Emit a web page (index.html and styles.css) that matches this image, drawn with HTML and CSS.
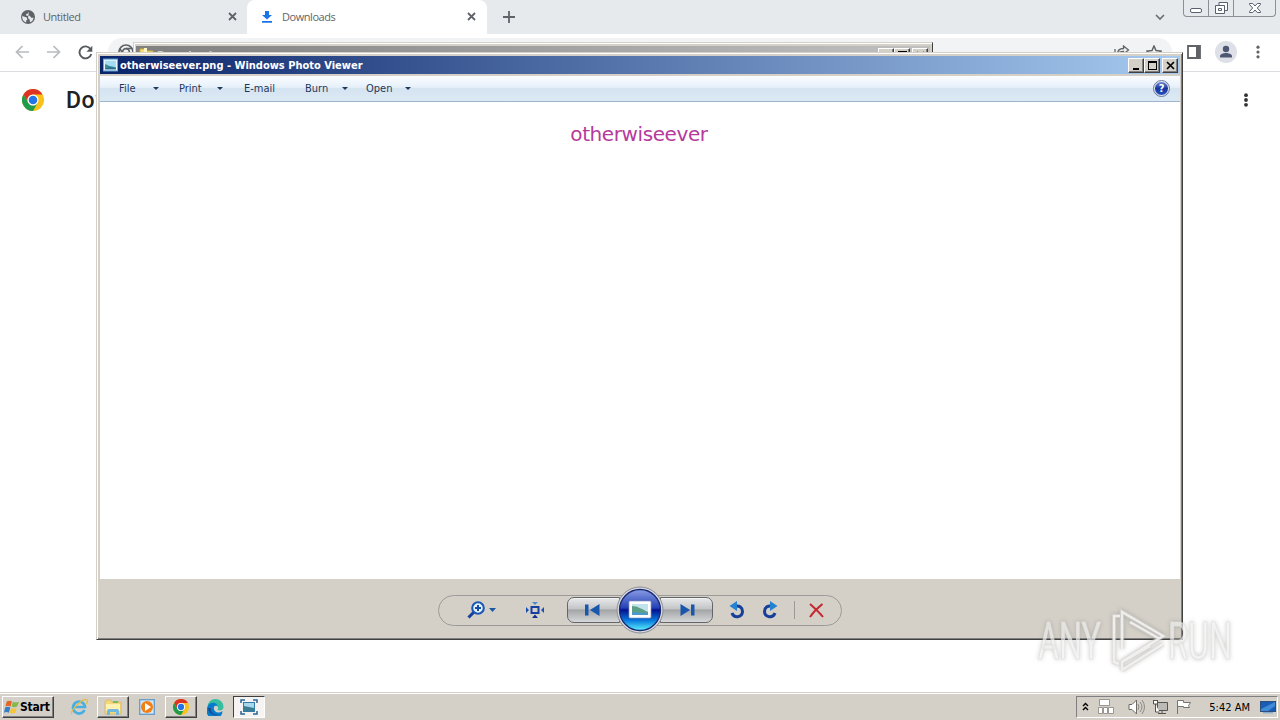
FILE: index.html
```
<!DOCTYPE html>
<html lang="en">

<head>
    <meta charset="UTF-8">
    <meta name="viewport" content="width=device-width, initial-scale=1.0">
    <title>Desktop</title>
    <link rel="stylesheet" href="styles.css">
</head>

<body>
    <svg class="defs" width="0" height="0">
        <defs>
            <symbol id="chrome-logo" viewBox="0 0 24 24">
                <circle cx="12" cy="12" r="12" fill="#fbc116"/>
                <path d="M1.6 6A12 12 0 0 1 22.4 6H12a6 6 0 0 0-5.2 9z" fill="#de3226"/>
                <path d="M1.6 6A12 12 0 0 0 12 24l5.2-9A6 6 0 0 1 6.8 15z" fill="#209b4c"/>
                <circle cx="12" cy="12" r="6" fill="#fff"/>
                <circle cx="12" cy="12" r="4.7" fill="#2474e8"/>
            </symbol>
            <symbol id="picture" viewBox="0 0 14 12">
                <rect x=".5" y=".5" width="13" height="11" fill="#f4faff" stroke="#67add8"/>
                <rect x="2" y="2" width="10" height="8" fill="#a2dbf2"/>
                <path d="M2 5l4 2 6 1v2H2z" fill="#3a8a90"/>
                <path d="M2 9l5-1 5 1v1H2z" fill="#2b6c92"/>
            </symbol>
            <linearGradient id="orb" x1="0" y1="0" x2="0" y2="1">
                <stop offset="0" stop-color="#8a9de4"/>
                <stop offset=".45" stop-color="#2340b6"/>
                <stop offset=".5" stop-color="#04118e"/>
                <stop offset=".75" stop-color="#0878dc"/>
                <stop offset="1" stop-color="#5df4ff"/>
            </linearGradient>
        </defs>
    </svg>

    <main class="chrome">
        <div class="tabs">
            <div class="tab">
                <svg class="globe" width="14" height="14" viewBox="0 0 14 14">
                    <circle cx="7" cy="7" r="7" fill="#5f6368"/>
                    <path d="M1.3 6l4.4 1.4.7 2-1.2 1v2.2A6 6 0 0 1 1.3 6zM8 1.5L7 3.6 5.2 4v1.7h3.6l1.4 2h2.4a5.7 5.7 0 0 1-3.5 4.6L8.6 9.4 7 8" fill="#e7eaed"/>
                </svg>
                <span class="tab-title">Untitled</span>
                <svg class="close" width="9" height="9" viewBox="0 0 9 9"><path d="M1 1l7 7M8 1L1 8" stroke="#5f6368" stroke-width="1.8"/></svg>
            </div>
            <div class="tab tab-active">
                <svg class="download" width="10" height="12" viewBox="0 0 10 12"><path d="M3 0h4v4h3L5 8.6 0 4h3zM0 10h10v1.7H0z" fill="#1a73e8"/></svg>
                <span class="tab-title">Downloads</span>
                <svg class="close" width="9" height="9" viewBox="0 0 9 9"><path d="M1 1l7 7M8 1L1 8" stroke="#5f6368" stroke-width="1.8"/></svg>
            </div>
            <svg class="new-tab" width="12" height="12" viewBox="0 0 12 12"><path d="M6 0v12M0 6h12" stroke="#5f6368" stroke-width="1.8"/></svg>
            <svg class="tab-search" width="10" height="7" viewBox="0 0 10 7"><path d="M1 1l4 4 4-4" fill="none" stroke="#6b6f73" stroke-width="1.7"/></svg>
            <div class="win-buttons">
                <span class="wb"><svg width="12" height="16" viewBox="0 0 12 16"><rect x=".5" y="8.500" width="11" height="4" rx="1.500" fill="#fff" stroke="#596070"/></svg></span>
                <span class="wb"><svg width="13" height="16" viewBox="0 0 13 16"><path d="M4 5V2.500h8.500v8H10" fill="#fff" stroke="#596070"/><path d="M.5 5.500h9v8h-9zM3.500 8.500h3v2h-3z" fill="#fff" stroke="#596070"/></svg></span>
                <span class="wb wb-close"><svg width="12" height="16" viewBox="0 0 12 16"><path d="M.5 3.500h3.200L6 6l2.300-2.500h3.200v1L8.300 8l3.200 3.500v1H8.300L6 10l-2.300 2.500H.5v-1L3.700 8 .5 4.500z" fill="#fff" stroke="#596070"/></svg></span>
            </div>
        </div>
        <div class="toolbar">
            <svg width="14" height="14" viewBox="0 0 14 14"><path d="M14 7H1.500M7.500 1l-6 6 6 6" fill="none" stroke="#b8babd" stroke-width="1.7"/></svg>
            <svg class="forward" width="14" height="14" viewBox="0 0 14 14"><path d="M0 7h12.500M6.500 1l6 6-6 6" fill="none" stroke="#b8babd" stroke-width="1.7"/></svg>
            <svg class="reload" width="15" height="15" viewBox="0 0 15 15"><path d="M12.500 4A6 6 0 1 0 13.300 9" fill="none" stroke="#56595d" stroke-width="1.900"/><path d="M14.300.8v5.900H8.500z" fill="#56595d"/></svg>
            <div class="omnibox">
                <svg width="16" height="16" viewBox="0 0 16 16"><circle cx="8" cy="8" r="7" fill="none" stroke="#5f6368" stroke-width="1.700"/><circle cx="8" cy="8" r="3.400" fill="none" stroke="#5f6368" stroke-width="1.700"/><path d="M8 4.500h6.300M5 10L1.800 4.500M11 10l-3.200 5.500" stroke="#5f6368" stroke-width="1.500"/></svg>
                <svg class="share" width="16" height="14" viewBox="0 0 16 14"><path d="M1 4v8.500h12V9M3.500 9c0-4 3-5.500 6-5.500V1L14.500 5l-5 4V6.500C7 6.500 5 7 3.500 9z" fill="none" stroke="#5f6368" stroke-width="1.300"/></svg>
                <svg width="16" height="15" viewBox="0 0 16 15"><path d="M8 1l2 4.600 5 .5-3.800 3.200L12.400 14 8 11.500 3.600 14l1.200-4.700L1 6.100l5-.5z" fill="none" stroke="#5f6368" stroke-width="1.500"/></svg>
            </div>
            <svg class="side-panel" width="14" height="14" viewBox="0 0 14 14"><path d="M1 1h12v12H1z" fill="#fff" stroke="#5f6368" stroke-width="1.800"/><path d="M9 1h4v12H9z" fill="#5f6368"/></svg>
            <svg class="avatar" width="22" height="22" viewBox="0 0 22 22"><circle cx="11" cy="11" r="11" fill="#dde0e6"/><circle cx="11" cy="8" r="3.200" fill="#4d5773"/><path d="M5 16.500v-1.200c0-2.300 3.500-3.300 6-3.300s6 1 6 3.300v1.200z" fill="#4d5773"/></svg>
            <svg width="4" height="14" viewBox="0 0 4 14" fill="#5f6368"><circle cx="2" cy="2.200" r="1.600"/><circle cx="2" cy="7" r="1.600"/><circle cx="2" cy="11.800" r="1.600"/></svg>
        </div>
        <div class="page-header">
            <svg width="22" height="22"><use href="#chrome-logo"/></svg>
            <h1>Downloads</h1>
            <svg class="more" width="4" height="14" viewBox="0 0 4 14"><circle cx="2" cy="2.200" r="1.900"/><circle cx="2" cy="7" r="1.900"/><circle cx="2" cy="11.800" r="1.900"/></svg>
        </div>
    </main>

    <div class="explorer">
        <div class="explorer-title">
            <svg width="16" height="14" viewBox="0 0 16 14"><path d="M1 1h5l2 2h6v10H1z" fill="#f5dc7c" stroke="#d0ad40"/><path d="M5 0h3v7H5z" fill="#fff6c4"/></svg>
            <span>Downloads</span>
            <div class="caption">
                <span class="cap"><svg width="9" height="9" viewBox="0 0 9 9"><path d="M1 7h5v2H1z"/></svg></span>
                <span class="cap"><svg width="9" height="9" viewBox="0 0 9 9"><path d="M0 0h9v9H0zM1 2v6h7V2z" fill-rule="evenodd"/></svg></span>
                <span class="cap cap-close"><svg width="9" height="9" viewBox="0 0 9 9"><path d="M1 1l7 7M8 1L1 8" stroke="#000" stroke-width="1.700"/></svg></span>
            </div>
        </div>
    </div>

    <section class="viewer">
        <header class="titlebar">
            <svg width="15" height="14"><use href="#picture"/></svg>
            <span class="title">otherwiseever.png - Windows Photo Viewer</span>
            <div class="caption">
                <span class="cap"><svg width="9" height="9" viewBox="0 0 9 9"><path d="M1 7h6v2H1z"/></svg></span>
                <span class="cap"><svg width="9" height="9" viewBox="0 0 9 9"><path d="M0 0h9v9H0zM1 2v6h7V2z" fill-rule="evenodd"/></svg></span>
                <span class="cap cap-close"><svg width="9" height="9" viewBox="0 0 9 9"><path d="M1 1l7 7M8 1L1 8" stroke="#000" stroke-width="1.700"/></svg></span>
            </div>
        </header>
        <nav class="menu">
            <span class="item file">File</span><i class="arrow"></i>
            <span class="item print">Print</span><i class="arrow"></i>
            <span class="item email">E-mail</span>
            <span class="item burn">Burn</span><i class="arrow"></i>
            <span class="item open">Open</span><i class="arrow"></i>
            <span class="help">?</span>
        </nav>
        <div class="photo"><p>otherwiseever</p></div>
        <footer class="controls">
            <div class="pill">
                <svg class="zoom" width="19" height="18" viewBox="0 0 19 18"><path d="M7 11l-5.500 5.500" stroke="#173f9b" stroke-width="3"/><circle cx="11" cy="7" r="5.800" fill="#e4f3fb" stroke="#1c57b5" stroke-width="2.100"/><path d="M11 4v6M8 7h6" stroke="#164da6" stroke-width="2"/></svg>
                <i class="arrow blue"></i>
                <svg class="fit" width="18" height="16" viewBox="0 0 18 16"><path d="M5.500 5h7v6h-7z" fill="none" stroke="#153fa0" stroke-width="2"/><path d="M6 0h6L9 3z" fill="#4a8cca"/><path d="M0 5v6l3-3zM18 5v6l-3-3z" fill="#1c4eae"/><path d="M6 16h6l-3-3.500z" fill="#122e8d"/></svg>
                <div class="nav prev"><svg width="15" height="12" viewBox="0 0 15 12"><path d="M0 .5h3.500v11H0zM14.500 0v12L5 6z" fill="#1957ad"/></svg></div>
                <svg class="play" width="48" height="48" viewBox="0 0 48 48">
                    <circle cx="24" cy="24" r="23" fill="#d8d9dc" stroke="#8b8e98"/>
                    <circle cx="24" cy="24" r="20.500" fill="url(#orb)" stroke="#172875" stroke-width="1.300"/>
                    <rect x="13" y="15" width="22" height="17" rx="1" fill="#fff" stroke="#8d97b9" stroke-width=".7"/>
                    <rect x="16" y="18" width="16" height="11" fill="#c2e3ec"/>
                    <path d="M16 20c5 0 10 3 16 6v3H16z" fill="#5b9f86"/>
                    <path d="M16 26l16 1v2H16z" fill="#4b9aca"/>
                </svg>
                <div class="nav next"><svg width="15" height="12" viewBox="0 0 15 12"><path d="M11 .5h3.500v11H11zM.5 0v12L10 6z" fill="#1957ad"/></svg></div>
                <svg class="rotate left" width="16" height="18" viewBox="0 0 16 18"><path d="M6 5.200c4.500-1 7.500 1.500 7.500 5.300a5.400 5.400 0 0 1-10.500 1.600" fill="none" stroke="#173f99" stroke-width="3"/><path d="M.5 5L8 0v10z" fill="#2482d0"/></svg>
                <svg class="rotate" width="16" height="18" viewBox="0 0 16 18"><path d="M10 5.200C5.500 4.200 2.500 6.700 2.500 10.500a5.400 5.400 0 0 0 10.500 1.600" fill="none" stroke="#173f99" stroke-width="3"/><path d="M15.500 5L8 0v10z" fill="#2482d0"/></svg>
                <i class="separator"></i>
                <svg width="15" height="15" viewBox="0 0 15 15"><path d="M1 1c4 3.500 9 8 13 13M13.500 1C9 4.500 4 9.500 1 14" fill="none" stroke="#c3272f" stroke-width="2"/></svg>
            </div>
        </footer>
    </section>

    <svg class="watermark" width="204" height="74" viewBox="0 0 204 74">
        <g class="mark">
            <text x="6" y="56" textLength="63" lengthAdjust="spacingAndGlyphs">ANY</text>
            <text x="136" y="56" textLength="64" lengthAdjust="spacingAndGlyphs">RUN</text>
            <path class="edge-line" d="M88 13h-6v46l5 2M90 46V9l41 24-40 25M98 19l30 17M90 67l41-26M90 67V59l28-16"/>
            <path d="M88 13h-6v46l5 2M90 46V9l41 24-40 25M98 19l30 17M90 67l41-26M90 67V59l28-16"/>
        </g>
    </svg>

    <footer class="taskbar">
        <div class="start">
            <svg width="16" height="16" viewBox="0 0 17 16"><path d="M3 2c2-1 4-1 5.500 0L7 7.500C5 6.500 3.500 6.500 1.500 7.500z" fill="#e66424"/><path d="M9.500 2.500c2 1 4 1 6.500 0l-2 5c-2 1-4 1-6 0z" fill="#83b84b"/><path d="M1.200 8.500c2-1 4-1 5.500 0L5.200 14c-2-1-3.500-1-5.200 0z" fill="#347fc8"/><path d="M7.500 9c2 1 4 1 6 0L12 14c-2 1-4 1-6 0z" fill="#f5c43a"/></svg>
            <b>Start</b>
        </div>
        <div class="task ie"><svg width="18" height="18" viewBox="0 0 18 18"><path d="M14.500 12A6 6 0 1 1 15 9H4" fill="none" stroke="#4aafe0" stroke-width="2.700"/><path d="M2 16C-1 13 14-1 17 2c1 1 0 3-1 4" fill="none" stroke="#e5bb42" stroke-width="1.200"/></svg></div>
        <div class="task raised"><svg width="18" height="17" viewBox="0 0 18 17"><path d="M1 3l1-2h5l1 2h9v12H1z" fill="#f2d77d" stroke="#d4b45f" stroke-width=".7"/><path d="M2 5h14v7H2z" fill="#fff2af"/><path d="M3 16v-4q0-2 2-2h8q2 0 2 2v4h-3v-3H6v3z" fill="#73b9dd"/><path d="M9 2h5v2H9z" fill="#79bd5a"/></svg></div>
        <div class="task wmp"><svg width="16" height="16" viewBox="0 0 16 16"><rect x=".7" y=".7" width="14.600" height="14.600" fill="#d3e6f4" stroke="#659cc8" stroke-width="1.300"/><circle cx="8" cy="8" r="6" fill="#f17f16"/><path d="M6 4v8l6-4z" fill="#fff"/></svg></div>
        <div class="task raised"><svg width="16" height="16"><use href="#chrome-logo"/></svg></div>
        <div class="task edge"><svg width="17" height="17" viewBox="0 0 17 17"><path d="M.5 8A8 8 0 0 1 16.500 8c0 3-3 4-6 3 2-3-1-5-4-4S.5 9 .5 8z" fill="#35bca1"/><path d="M.5 8c1-5 9-6 10-1C8 5 5 9 8 12c2 2 5 2 7.500 0A8 8 0 1 1 .5 8z" fill="#087acc"/><path d="M4 9c-1 4 3 7 7 7-3 1-10-1-10-7z" fill="#174d91"/></svg></div>
        <div class="task pressed"><svg width="18" height="16" viewBox="0 0 18 16"><path d="M1 4V1h4M13 1h4v3M17 12v3h-4M5 15H1v-3" fill="none" stroke="#276597" stroke-width="1.500"/><rect x="3.500" y="3.500" width="11" height="9" fill="#a5d8ed" stroke="#347ba7"/><path d="M4 7l10 2v3H4z" fill="#3c7c93"/></svg></div>
        <div class="tray">
            <svg class="chevrons" width="7" height="11" viewBox="0 0 7 11"><path d="M1 4l2.500-2.500L6 4M1 8l2.500-2.500L6 8" fill="none" stroke="#000" stroke-width="1.400"/></svg>
            <svg class="blocks" width="17" height="16" viewBox="0 0 17 16"><path d="M1.500.5h10v6h-10zM.5 8.500h4v6h-4zM5.500 8.500h4v6h-4zM10.500 8.500h5v6h-5z" fill="#fff" stroke="#85827c" stroke-width=".8"/></svg>
            <svg class="speaker" width="17" height="16" viewBox="0 0 17 16"><path d="M1 5.500h3L8.500 1v14L4 10.500H1z" fill="#fff" stroke="#6d6b67"/><path d="M10 5q2 3 0 6M12 3q4 5 0 10M14 1q5 7 0 14" fill="none" stroke="#8b8984"/></svg>
            <svg class="network" width="17" height="16" viewBox="0 0 17 16"><path d="M5.500 3.500h10v8h-10zM6 14.500h8M10 12v2" fill="#bcbab6" stroke="#55534f"/><path d="M1.500 1v4h4V1M3.500 5v8h4M1 1.500h5" fill="#fff" stroke="#55534f"/></svg>
            <svg class="flag" width="17" height="16" viewBox="0 0 17 16"><path d="M1.500 15V1.500h6v2h7l-2 3 1 2h-6v-1h-6" fill="#fff" stroke="#77746f"/></svg>
            <time>5:42 AM</time>
            <svg width="16" height="13" viewBox="0 0 16 13"><rect x=".5" y=".5" width="15" height="10" fill="#175db7" stroke="#304d7c"/><path d="M1 8L15 1v4L8 10H1z" fill="#408bd7"/><path d="M3 11h10v1.500H3z" fill="#8bacc9"/></svg>
        </div>
    </footer>
</body>

</html>
```
FILE: styles.css
```
* {
    box-sizing: border-box;
}

body {
    width: 1280px;
    height: 720px;
    margin: 0;
    overflow: hidden;
    display: flex;
    flex-direction: column;
    background: #fff;
    font-family: "DejaVu Sans Condensed", "DejaVu Sans", sans-serif;
    font-size: 11px;
    color: #000;
}

svg {
    display: block;
    flex-shrink: 0;
}

.defs {
    position: absolute;
}

.chrome {
    height: 692px;
}

.tabs {
    height: 34px;
    display: flex;
    align-items: center;
    background: #e7eaed;
}

.tab {
    width: 247px;
    height: 34px;
    padding-left: 21px;
    padding-right: 10px;
    padding-bottom: 1px;
    display: flex;
    align-items: center;
    color: #5f6368;
    font-family: "Open Sans", sans-serif;
    font-size: 11px;
    letter-spacing: -.45px;
}

.tab-active {
    width: 240px;
    padding-left: 15px;
    padding-right: 11px;
    background: #fff;
    border-radius: 8px 8px 0 0;
}

.tab-title {
    flex: 1;
    margin-left: 8px;
}

.tab-active .tab-title {
    margin-left: 10px;
}

.new-tab {
    margin-left: 16px;
}

.tab-search {
    margin-left: auto;
}

.win-buttons {
    display: flex;
    align-self: flex-start;
    height: 17px;
    margin-left: 18px;
    margin-right: 4px;
    border: 1px solid #8c9096;
    border-top: 0;
    border-radius: 0 0 4px 4px;
}

.wb {
    width: 25px;
    display: flex;
    justify-content: center;
    border-right: 1px solid #8c9096;
}

.wb-close {
    width: 41px;
    border-right: 0;
}

.toolbar {
    height: 38px;
    padding-left: 15px;
    padding-right: 20px;
    padding-bottom: 1px;
    display: flex;
    align-items: center;
    border-bottom: 1px solid #dadce0;
}

.forward {
    margin-left: 18px;
}

.reload {
    margin-left: 17px;
}

.omnibox {
    width: 1064px;
    height: 28px;
    margin-left: 15px;
    padding: 0 10px;
    display: flex;
    align-items: center;
    border-radius: 14px;
    background: #f1f3f4;
}

.share {
    margin-left: auto;
    margin-right: 16px;
}

.side-panel {
    margin-left: 15px;
}

.avatar {
    margin-left: 14px;
    margin-right: auto;
}

.page-header {
    height: 56px;
    padding: 0 32px 0 22px;
    display: flex;
    align-items: center;
}

.page-header h1 {
    margin: 0 0 0 22px;
    font: 500 23px Roboto, sans-serif;
    letter-spacing: .6px;
    color: #202124;
}

.more {
    margin-left: auto;
    fill: #333;
}

/* window behind the viewer */
.explorer {
    position: absolute;
    left: 133px;
    top: 42px;
    width: 800px;
    height: 40px;
    padding: 2px;
    background: #d4d0c8;
    border: 1px solid #d4d0c8;
    border-right-color: #404040;
    box-shadow: inset 1px 1px #fff;
}

.explorer-title {
    height: 18px;
    margin-top: 1px;
    padding-left: 3px;
    display: flex;
    align-items: center;
    background: linear-gradient(90deg, #808080, #c0c0c0);
    color: #d4d0c8;
    font-weight: bold;
}

.explorer-title > span {
    margin-left: 2px;
}

.caption {
    display: flex;
    margin-left: auto;
    padding-right: 2px;
}

.cap {
    width: 16px;
    height: 14px;
    padding: 2px 0 0 3px;
    background: #d4d0c8;
    border: 1px solid #404040;
    border-left-color: #fff;
    border-top-color: #fff;
    box-shadow: inset -1px -1px #808080;
}

.titlebar .cap {
    height: 15px;
}

.cap-close {
    margin-left: 2px;
}

.viewer {
    position: absolute;
    left: 96px;
    top: 52px;
    width: 1087px;
    height: 588px;
    padding: 2px 1px 3px 2px;
    display: flex;
    flex-direction: column;
    background: #d4d0c8;
    border: 1px solid #d4d0c8;
    border-right-color: #404040;
    border-bottom-color: #404040;
    box-shadow: inset 1px 1px #fff, inset -1px -1px #808080;
}

.titlebar {
    height: 18px;
    margin: 1px 1px 2px;
    padding-left: 3px;
    display: flex;
    align-items: center;
    background: linear-gradient(90deg, #0a246a, #a6caf0);
    color: #fff;
}

.title {
    font-weight: bold;
    margin-left: 2px;
}

.menu {
    height: 26px;
    margin: 0 1px;
    padding-bottom: 1px;
    display: flex;
    align-items: center;
    background: linear-gradient(#fbfdff, #e6f0fa 45%, #d5e4f1 50%, #dce9f5);
    border-bottom: 1px solid #9eb4ca;
    color: #1e395b;
}

.item {
    margin-left: 21px;
}

.file {
    width: 34px;
    margin-left: 19px;
}

.print {
    width: 38px;
    margin-left: 20px;
}

.email {
    width: 40px;
    margin-left: 21px;
}

.burn {
    width: 37px;
}

.open {
    width: 39px;
    margin-left: 18px;
}

.arrow {
    border: 3px solid transparent;
    border-top-color: #1e395b;
    border-bottom: 0;
}

.help {
    width: 15px;
    height: 15px;
    margin-left: auto;
    margin-right: 11px;
    border: 1px solid #e3e8f5;
    border-radius: 50%;
    outline: 1px solid #68779b;
    background: linear-gradient(#708acd, #1635a0 50%, #2852bc);
    color: #fff;
    font-weight: bold;
    line-height: 13px;
    text-align: center;
}

.photo {
    flex: 1;
    margin: 0 1px;
    background: #fff;
}

.photo p {
    margin: 20px 0 0;
    padding-right: 2px;
    text-align: center;
    font: 20px "DejaVu Sans", sans-serif;
    line-height: 24px;
    letter-spacing: -.4px;
    color: #b53a9c;
}

.controls {
    height: 57px;
    display: flex;
    justify-content: center;
    align-items: center;
    padding-top: 6px;
}

.pill {
    width: 404px;
    height: 31px;
    padding-left: 28px;
    padding-bottom: 1px;
    display: flex;
    align-items: center;
    border: 1px solid #9c9b98;
    border-radius: 16px;
}

.blue {
    width: 7px;
    height: 4px;
    margin-left: 3px;
    border: 0;
    background: #1a57a5;
    clip-path: polygon(0 0, 100% 0, 50% 100%);
}

.fit {
    margin-left: 30px;
}

.nav {
    width: 53px;
    height: 26px;
    display: flex;
    align-items: center;
    border: 1px solid #62656a;
    background: linear-gradient(#e8e9ea, #c4c5c7 45%, #a4a5a7 50%, #d6d7d8);
    box-shadow: inset 0 1px #f1f1f1;
}

.prev {
    margin-left: 23px;
    padding-left: 17px;
    border-radius: 7px 0 0 7px;
}

.next {
    padding-left: 19px;
    border-radius: 0 7px 7px 0;
}

.play {
    margin: 0 -4px;
    z-index: 1;
}

.rotate {
    margin-left: 17px;
}

.left {
    margin-left: 16px;
}

.separator {
    height: 18px;
    margin: 0 14px 0 16px;
    border-left: 1px solid #9d9b97;
}

/* recorder mark over the desktop */
.watermark {
    position: absolute;
    left: 1032px;
    top: 603px;
    overflow: visible;
}

.mark {
    fill: rgba(255, 255, 255, .6);
    stroke: rgba(225, 223, 221, .7);
    filter: drop-shadow(0 0 2px rgba(90, 90, 90, .4));
}

.mark text {
    font: 51px/1 Roboto, sans-serif;
    stroke-width: 1.2px;
}

.mark path {
    fill: none;
    stroke: rgba(246, 245, 244, .85);
    stroke-width: 2.5px;
}

.mark .edge-line {
    stroke: rgba(215, 213, 210, .5);
    stroke-width: 4.5px;
}

.taskbar {
    height: 28px;
    padding: 1px 2px 0;
    display: flex;
    align-items: center;
    background: #d4d0c8;
    border-top: 1px solid #d4d0c8;
    box-shadow: inset 0 1px #fff;
}

.start {
    width: 52px;
    height: 22px;
    padding-left: 1px;
    display: flex;
    align-items: center;
    font-size: 12px;
    letter-spacing: -.2px;
    border: 1px solid #404040;
    border-left-color: #fff;
    border-top-color: #fff;
    box-shadow: inset -1px -1px #808080;
}

.task {
    width: 32px;
    height: 22px;
    display: flex;
    justify-content: center;
    align-items: center;
}

.ie {
    margin-left: 9px;
    margin-right: 2px;
}

.wmp,
.edge {
    width: 36px;
}

.raised {
    border: 1px solid #404040;
    border-left-color: #fff;
    border-top-color: #fff;
    box-shadow: inset -1px -1px #808080;
}

.pressed {
    background: #f5f4f2;
    border: 1px solid #fff;
    border-left-color: #404040;
    border-top-color: #404040;
}

.tray {
    width: 202px;
    height: 22px;
    margin-left: auto;
    padding: 0 1px 0 5px;
    display: flex;
    align-items: center;
    border: 1px solid #fff;
    border-left-color: #808080;
    border-top-color: #808080;
}

.blocks {
    margin-left: 9px;
}

.speaker {
    margin-left: 13px;
}

.network {
    margin-left: 7px;
}

.flag {
    margin-left: 7px;
}

time {
    margin-left: auto;
    margin-right: 10px;
}
```
